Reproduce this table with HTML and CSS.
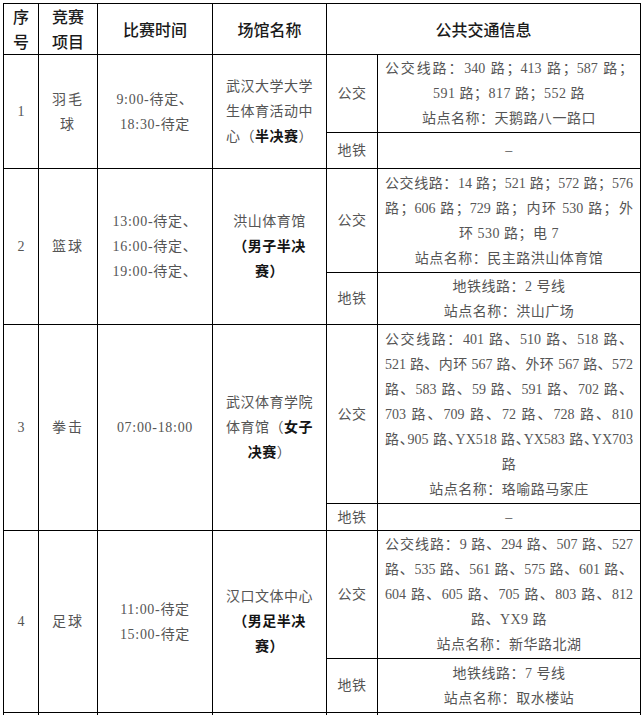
FILE: index.html
```html
<!DOCTYPE html>
<html lang="zh-CN">
<head>
<meta charset="utf-8">
<title>比赛场馆公共交通信息</title>
<link rel="stylesheet" href="styles.css">
</head>
<body>
<div class="page">
<table class="schedule">
  <colgroup>
    <col class="c-no"><col class="c-sport"><col class="c-time"><col class="c-venue"><col class="c-mode"><col class="c-info">
  </colgroup>
  <thead>
    <tr class="r-head">
      <th>序<br>号</th>
      <th>竞赛<br>项目</th>
      <th>比赛时间</th>
      <th>场馆名称</th>
      <th colspan="2">公共交通信息</th>
    </tr>
  </thead>
  <tbody>
    <tr class="r1-bus">
      <td rowspan="2" class="no">1</td>
      <td rowspan="2" class="sport">羽毛<br>球</td>
      <td rowspan="2" class="time">9:00-待定、<br>18:30-待定</td>
      <td rowspan="2" class="venue">武汉大学大学<br>生体育活动中<br>心（<b>半决赛</b>）</td>
      <td class="mode">公交</td>
      <td class="info"><span class="j">公交线路：340 路；413 路；587 路；</span><span class="c">591 路；817 路；552 路</span><span class="c">站点名称：天鹅路八一路口</span></td>
    </tr>
    <tr class="r1-metro">
      <td class="mode">地铁</td>
      <td class="info"><span class="c">–</span></td>
    </tr>

    <tr class="r2-bus">
      <td rowspan="2" class="no">2</td>
      <td rowspan="2" class="sport">篮球</td>
      <td rowspan="2" class="time">13:00-待定、<br>16:00-待定、<br>19:00-待定、</td>
      <td rowspan="2" class="venue">洪山体育馆<br><b>（男子半决</b><br><b>赛）</b></td>
      <td class="mode">公交</td>
      <td class="info"><span class="j">公交线路：14 路；521 路；572 路；576</span><span class="j">路；606 路；729 路；内环 530 路；外</span><span class="c">环 530 路；电 7</span><span class="c">站点名称：民主路洪山体育馆</span></td>
    </tr>
    <tr class="r2-metro">
      <td class="mode">地铁</td>
      <td class="info"><span class="c">地铁线路：2 号线</span><span class="c">站点名称：洪山广场</span></td>
    </tr>

    <tr class="r3-bus">
      <td rowspan="2" class="no">3</td>
      <td rowspan="2" class="sport">拳击</td>
      <td rowspan="2" class="time">07:00-18:00</td>
      <td rowspan="2" class="venue">武汉体育学院<br>体育馆（<b>女子</b><br><b>决赛</b>）</td>
      <td class="mode">公交</td>
      <td class="info"><span class="j">公交线路：401 路、510 路、518 路、</span><span class="j">521 路、内环 567 路、外环 567 路、572</span><span class="j">路、583 路、59 路、591 路、702 路、</span><span class="j">703 路、709 路、72 路、728 路、810</span><span class="j tight">路、905 路、YX518 路、YX583 路、YX703</span><span class="c">路</span><span class="c">站点名称：珞喻路马家庄</span></td>
    </tr>
    <tr class="r3-metro">
      <td class="mode">地铁</td>
      <td class="info"><span class="c">–</span></td>
    </tr>

    <tr class="r4-bus">
      <td rowspan="2" class="no">4</td>
      <td rowspan="2" class="sport">足球</td>
      <td rowspan="2" class="time">11:00-待定<br>15:00-待定</td>
      <td rowspan="2" class="venue">汉口文体中心<br><b>（男足半决</b><br><b>赛）</b></td>
      <td class="mode">公交</td>
      <td class="info"><span class="j">公交线路：9 路、294 路、507 路、527</span><span class="j">路、535 路、561 路、575 路、601 路、</span><span class="j">604 路、605 路、705 路、803 路、812</span><span class="c">路、YX9 路</span><span class="c">站点名称：新华路北湖</span></td>
    </tr>
    <tr class="r4-metro">
      <td class="mode">地铁</td>
      <td class="info"><span class="c">地铁线路：7 号线</span><span class="c">站点名称：取水楼站</span></td>
    </tr>

    <tr class="r5">
      <td></td><td></td><td></td><td></td><td></td><td></td>
    </tr>
  </tbody>
</table>
</div>
</body>
</html>
```

FILE: styles.css
```css
* {
  box-sizing: border-box;
}

body {
  margin: 0;
  background: #ffffff;
}

.page {
  padding: 3px 0 0 3px;
}

.schedule {
  border-collapse: collapse;
  table-layout: fixed;
  width: 637px;
  font-family: "Liberation Serif", "Noto Sans CJK SC", serif;
  font-size: 14px;
  line-height: 25px;
  color: #555555;
}

.c-no { width: 35px; }
.c-sport { width: 59px; }
.c-time { width: 115px; }
.c-venue { width: 114px; }
.c-mode { width: 51px; }
.c-info { width: 263px; }

.schedule th,
.schedule td {
  border: 1px solid #000000;
  padding: 0 4px;
  text-align: center;
  vertical-align: middle;
}

.schedule th {
  font-family: "Noto Sans CJK SC", sans-serif;
  font-size: 16px;
  font-weight: 500;
  line-height: 25px;
  color: #1a1a1a;
}

.schedule b {
  font-weight: 700;
  color: #141414;
}

.sport {
  letter-spacing: 2px;
}

.time {
  letter-spacing: 0.7px;
}

.venue {
  letter-spacing: 0.5px;
}

.mode {
  letter-spacing: 0.5px;
}

.schedule td.info {
  padding: 0 7px;
  letter-spacing: 0.5px;
}

.info .j,
.info .c {
  display: block;
}

.info .j {
  text-align: justify;
  text-align-last: justify;
  letter-spacing: 0;
}

.info .tight {
  font-feature-settings: "halt";
}

.info .c {
  text-align: center;
}

.r-head { height: 50px; }
.r1-bus { height: 78px; }
.r1-metro { height: 36px; }
.r2-bus { height: 104px; }
.r2-metro { height: 52px; }
.r3-bus { height: 179px; }
.r3-metro { height: 27px; }
.r4-bus { height: 128px; }
.r4-metro { height: 54px; }
.r5 { height: 40px; }
```
